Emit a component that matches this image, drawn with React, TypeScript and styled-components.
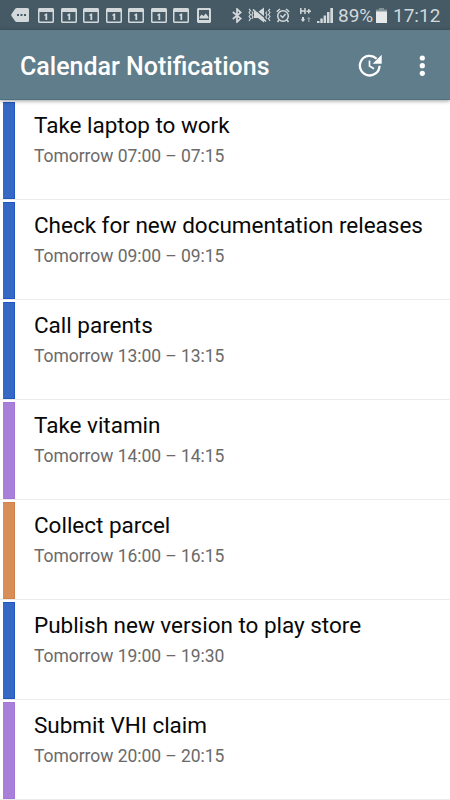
import React from "react";
import styled, { createGlobalStyle } from "styled-components";

const GlobalStyle = createGlobalStyle`
  * { box-sizing: border-box; }
  body { margin: 0; background: #fff; font-family: Roboto, sans-serif; }
`;

const Screen = styled.div`
  width: 450px;
  height: 800px;
  overflow: hidden;
  display: flex;
  flex-direction: column;
  background: #fff;
`;

const StatusBar = styled.div`
  flex: none;
  height: 30px;
  display: flex;
  align-items: center;
  justify-content: space-between;
  padding: 0 10px 0 11px;
  background: #455a64;
  color: #d3d8db;
`;

const StatusGroup = styled.div`
  display: flex;
  align-items: center;
`;

const StatusIcon = styled.svg<{ $gap?: number }>`
  display: block;
  flex: none;
  margin-left: ${(p) => p.$gap ?? 0}px;
`;

const StatusText = styled.span<{ $width: number; $gap: number; $size: number }>`
  width: ${(p) => p.$width}px;
  margin-left: ${(p) => p.$gap}px;
  font-size: ${(p) => p.$size}px;
  line-height: 30px;
  padding-top: 1px;
  height: 30px;
  white-space: nowrap;
`;

const AppBar = styled.header`
  flex: none;
  height: 70px;
  display: flex;
  align-items: center;
  padding: 2px 17px 0 20px;
  background: #607d8b;
  border-bottom: 1px solid #507080;
  box-shadow: 0 1px 4px rgba(0, 0, 0, 0.4);
  z-index: 1;
`;

const Title = styled.h1`
  flex: 1;
  margin: 0;
  padding-top: 3px;
  font-size: 25px;
  font-weight: 500;
  line-height: 30px;
  color: #fff;
  white-space: nowrap;
`;

const IconButton = styled.button<{ $width: number; $gap?: number }>`
  display: flex;
  align-items: center;
  justify-content: center;
  width: ${(p) => p.$width}px;
  height: 30px;
  margin-left: ${(p) => p.$gap ?? 0}px;
  padding: 0;
  border: 0;
  background: none;
`;

const List = styled.main`
  display: flex;
  flex-direction: column;
`;

const Row = styled.article`
  height: 100px;
  display: flex;
  padding: 2px 0 0 3px;
  border-bottom: 1px solid #ebebeb;
`;

const ColorBar = styled.div<{ $color: string; $edge: string }>`
  width: 12px;
  background: ${(p) => p.$color};
  border: 1px solid ${(p) => p.$edge};
  border-left-color: ${(p) => p.$color};
`;

const Details = styled.div`
  padding: 8px 0 0 19px;
  white-space: nowrap;
`;

const EventName = styled.h2`
  margin: 0;
  font-size: 22.5px;
  letter-spacing: -0.02px;
  font-weight: 400;
  line-height: 30px;
  color: #080808;
`;

const EventTime = styled.p`
  margin: 4px 0 0;
  font-size: 17.5px;
  letter-spacing: -0.05px;
  line-height: 24px;
  color: #6a6a6a;
`;

const blue = ["#3668c5", "#1f56c2"];
const purple = ["#a880da", "#a277d8"];
const orange = ["#d88e59", "#d28148"];

const events = [
  { name: "Take laptop to work", time: "07:00 – 07:15", color: blue },
  { name: "Check for new documentation releases", time: "09:00 – 09:15", color: blue },
  { name: "Call parents", time: "13:00 – 13:15", color: blue },
  { name: "Take vitamin", time: "14:00 – 14:15", color: purple },
  { name: "Collect parcel", time: "16:00 – 16:15", color: orange },
  { name: "Publish new version to play store", time: "19:00 – 19:30", color: blue },
  { name: "Submit VHI claim", time: "20:00 – 20:15", color: purple },
];

const MessageIcon = () => (
  <StatusIcon width="18" height="14" viewBox="0 0 18 14">
    <path d="M6 0h10.5Q18 0 18 1.500v11Q18 14 16.500 14H6Q4.700 14 4 13L.5 8Q0 7 .5 6L4 1Q4.700 0 6 0z" fill="#d3d8db" />
    <path d="M6 6h2v2H6zM9.500 6h2v2h-2zM13 6h2v2h-2z" fill="#455a64" />
  </StatusIcon>
);

const CalendarIcon = ({ gap }: { gap: number }) => (
  <StatusIcon width="16" height="15" viewBox="0 0 16 15" $gap={gap}>
    <path fillRule="evenodd" d="M1 0h14l1 1v13l-1 1H1l-1-1V1zM1.500 4v9.500h13V4z" fill="#d3d8db" />
    <path d="M6.300 6.800L8 5.500h1.200V12H7.400V7.800H6.300z" fill="#d3d8db" />
  </StatusIcon>
);

const PictureIcon = () => (
  <StatusIcon width="14" height="15" viewBox="0 0 14 15" $gap={8}>
    <path fillRule="evenodd" d="M1 0h12l1 1v13l-1 1H1l-1-1V1zM2 2v10h10V2z" fill="#d3d8db" />
    <path d="M2.500 10.500V9l2-2.500L6.500 8 8.800 5.500 11.500 9v1.500z" fill="#d3d8db" />
  </StatusIcon>
);

const BluetoothIcon = () => (
  <StatusIcon width="10" height="15" viewBox="0 0 10 15" fill="none" stroke="#d3d8db" strokeWidth="1.700">
    <path d="M.8 4l8 6.500L5 14V1l3.800 3.500-8 6.500" />
  </StatusIcon>
);

const MuteIcon = () => (
  <StatusIcon width="23" height="16" viewBox="0 0 23 16" $gap={6}>
    <path d="M6 5h4l6-4.500v15L10 11H6z" fill="#d3d8db" />
    <path d="M6 1.500l13 11" stroke="#455a64" strokeWidth="1.300" />
    <path d="M5 2.500l13 12" stroke="#d3d8db" strokeWidth="1.700" />
    <path d="M1 2l1.500 1.500L1 5.500l1.500 2L1 9.500l1.500 2L1 14M3.800 4.500L5 6 3.800 8 5 10l-1.200 2M22 2l-1.500 1.500L22 5.500l-1.500 2 1.500 2-1.500 2L22 14M19 4.500L17.800 6 19 8l-1.200 2 1.200 2" stroke="#d3d8db" fill="none" strokeWidth="1.100" />
  </StatusIcon>
);

const AlarmIcon = () => (
  <StatusIcon width="14" height="15" viewBox="0 0 14 15" $gap={5} fill="none" stroke="#d3d8db" strokeWidth="1.500">
    <circle cx="7" cy="8" r="5.300" />
    <path d="M.7 3.800L4 1M13.300 3.800L10 1M3 12l-1.500 2M11 12l1.500 2M4.300 7.200L6.600 9.500l3-3.500" />
  </StatusIcon>
);

const NetworkIcon = () => (
  <StatusIcon width="12" height="15" viewBox="0 0 12 15" $gap={10}>
    <path d="M.8 0v6M5 0v6M.8 3H5M6.500 3.200h4.500M8.800 1v4.500" stroke="#d3d8db" strokeWidth="1.500" />
    <path d="M2 9h2v2.200h1.300L3 14 .7 11.200H2z" fill="#d3d8db" />
    <path d="M8 14v-3H6.800l2-2.200 2 2.200H9.600v3z" fill="#84949b" />
  </StatusIcon>
);

const SignalIcon = () => (
  <StatusIcon width="16" height="15" viewBox="0 0 16 15" $gap={5}>
    <path d="M0 13h2.500v2H0zM3.300 10.500h2.500V15H3.300zM6.600 7.500h2.500V15H6.600zM10 4h2.500v11H10zM13.300 0H16v15h-2.700z" fill="#d3d8db" />
  </StatusIcon>
);

const BatteryIcon = () => (
  <StatusIcon width="11" height="15" viewBox="0 0 11 15" $gap={4}>
    <path d="M3 0h5v1.500h3V4H0V1.500h3z" fill="#84939a" />
    <path d="M0 3.500h11V15H0z" fill="#e7eaeb" />
  </StatusIcon>
);

const SnoozeIcon = () => (
  <svg width="24" height="24" viewBox="0 0 24 24">
    <path d="M21.500 11.700A9.800 9.800 0 1 1 18.600 4.700" fill="none" stroke="#fff" strokeWidth="2.300" />
    <path d="M23.700 .7v9h-9z" fill="#fff" />
    <path d="M11.500 6.600v5.400l4.500 2.700" fill="none" stroke="#fff" strokeWidth="1.700" />
  </svg>
);

const MoreIcon = () => (
  <svg width="6" height="22" viewBox="0 0 6 22" fill="#fff">
    <circle cx="3.300" cy="3" r="2.600" />
    <circle cx="3.300" cy="10.700" r="2.600" />
    <circle cx="3.300" cy="18.300" r="2.600" />
  </svg>
);

export default function App() {
  return (
    <Screen>
      <GlobalStyle />
      <StatusBar>
        <StatusGroup>
          <MessageIcon />
          {[9, 7, 6, 7, 6, 7, 6].map((gap, i) => (
            <CalendarIcon key={i} gap={gap} />
          ))}
          <PictureIcon />
        </StatusGroup>
        <StatusGroup>
          <BluetoothIcon />
          <MuteIcon />
          <AlarmIcon />
          <NetworkIcon />
          <SignalIcon />
          <StatusText $width={34} $gap={5} $size={19}>89%</StatusText>
          <BatteryIcon />
          <StatusText $width={47} $gap={6} $size={19}>17:12</StatusText>
        </StatusGroup>
      </StatusBar>
      <AppBar>
        <Title>Calendar Notifications</Title>
        <IconButton $width={24} aria-label="Snooze all">
          <SnoozeIcon />
        </IconButton>
        <IconButton $width={22} $gap={29} aria-label="More options">
          <MoreIcon />
        </IconButton>
      </AppBar>
      <List>
        {events.map((event) => (
          <Row key={event.name}>
            <ColorBar $color={event.color[0]} $edge={event.color[1]} />
            <Details>
              <EventName>{event.name}</EventName>
              <EventTime>Tomorrow {event.time}</EventTime>
            </Details>
          </Row>
        ))}
      </List>
    </Screen>
  );
}
